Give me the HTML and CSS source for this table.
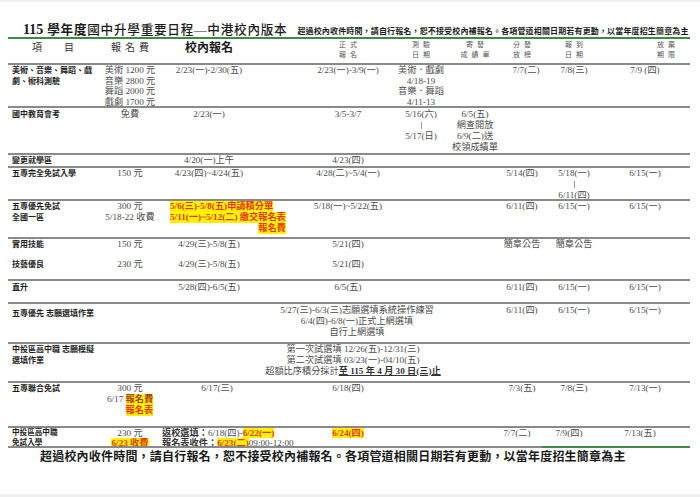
FILE: index.html
```html
<!DOCTYPE html>
<html lang="zh-Hant">
<head>
<meta charset="utf-8">
<title>115 學年度國中升學重要日程</title>
<link rel="stylesheet" href="styles.css">
</head>
<body>
<div class="page">
  <div class="sheet">
    <div class="title">
      <span class="t-num">115</span>
      <span class="t-main"><b>學年度</b>國中升學重要日程—中港校內版本</span>
      <span class="t-note">超過校內收件時間，請自行報名，恕不接受校內補報名。各項管道相關日期若有更動，以當年度招生簡章為主</span>
    </div>

    <div class="grid head">
      <div class="k1 h-item"><span>項</span><span>目</span></div>
      <div class="k2 h-fee">報名費</div>
      <div class="k3 h-in">校內報名</div>
      <div class="k5 h-sm">正式<br>報名</div>
      <div class="k6 h-sm">測驗<br>日期</div>
      <div class="k7 h-sm">寄發<br>成績單</div>
      <div class="k8 h-sm">分發<br>放榜</div>
      <div class="k9 h-sm">報到<br>日期</div>
      <div class="k10 h-sm h-quit">放棄<br>期限</div>
    </div>

    <div class="grid row r1">
      <div class="k1 item">美術、音樂、舞蹈、戲<br>劇、術科測驗</div>
      <div class="k2 c">美術 1200 元<br>音樂 2800 元<br>舞蹈 2000 元<br>戲劇 1700 元</div>
      <div class="k3 c">2/23(一)-2/30(五)</div>
      <div class="k5 c">2/23(一)-3/9(一)</div>
      <div class="k6 c">美術．戲劇<br>4/18-19<br>音樂．舞蹈<br>4/11-13</div>
      <div class="k8 c nudge-r">7/7(二)</div>
      <div class="k9 c">7/8(三)</div>
      <div class="k10 c">7/9 (四)</div>
    </div>

    <div class="grid row r2">
      <div class="k1 item">國中教育會考</div>
      <div class="k2 c">免費</div>
      <div class="k3 c">2/23(一)</div>
      <div class="k5 c">3/5-3/7</div>
      <div class="k6 c"><div>5/16(六)</div><div class="vbar"></div><div>5/17(日)</div></div>
      <div class="k7 c">6/5(五)<br>網查開放<br>6/9(二)送<br>校領成績單</div>
    </div>

    <div class="grid row r3">
      <div class="k1 item">變更就學區</div>
      <div class="k3 c">4/20(一)上午</div>
      <div class="k5 c">4/23(四)</div>
    </div>

    <div class="grid row r4">
      <div class="k1 item">五專完全免試入學</div>
      <div class="k2 c">150 元</div>
      <div class="k3 c">4/23(四)~4/24(五)</div>
      <div class="k5 c">4/28(二)~5/4(一)</div>
      <div class="k8 c">5/14(四)</div>
      <div class="k9 c"><div>5/18(一)</div><div class="vbar"></div><div>6/11(四)</div></div>
      <div class="k10 c">6/15(一)</div>
    </div>

    <div class="grid row r5">
      <div class="k1 item">五專優先免試<br>全國一區</div>
      <div class="k2 c">300 元<br>5/18-22 收費</div>
      <div class="k3 hl-cell">
        <div class="hl-wrap">
          <div class="hl-line">5/6(三)-5/8(五)申請積分單</div>
          <div class="hl-line">5/11(一)~5/12(二) 繳交報名表</div>
          <div class="hl-line end">報名費</div>
        </div>
      </div>
      <div class="k5 c">5/18(一)~5/22(五)</div>
      <div class="k8 c">6/11(四)</div>
      <div class="k9 c">6/15(一)</div>
      <div class="k10 c">6/15(一)</div>
    </div>

    <div class="grid row r6a">
      <div class="k1 item">實用技能</div>
      <div class="k2 c">150 元</div>
      <div class="k3 c">4/29(三)-5/8(五)</div>
      <div class="k5 c">5/21(四)</div>
      <div class="k8 c">簡章公告</div>
      <div class="k9 c">簡章公告</div>
    </div>
    <div class="grid sub r6b">
      <div class="k1 item">技藝優良</div>
      <div class="k2 c">230 元</div>
      <div class="k3 c">4/29(三)-5/8(五)</div>
      <div class="k5 c">5/21(四)</div>
    </div>

    <div class="grid row r7">
      <div class="k1 item">直升</div>
      <div class="k3 c">5/28(四)-6/5(五)</div>
      <div class="k5 c">6/5(五)</div>
      <div class="k8 c">6/11(四)</div>
      <div class="k9 c">6/15(一)</div>
      <div class="k10 c">6/15(一)</div>
    </div>

    <div class="grid row r8">
      <div class="k1 item low">五專優先 志願選填作業</div>
      <div class="span37 c merged">5/27(三)-6/3(三)志願選填系統操作練習<br>6/4(四)-6/8(一)正式上網選填<br>自行上網選填</div>
      <div class="k8 c">6/11(四)</div>
      <div class="k9 c">6/15(一)</div>
      <div class="k10 c">6/15(一)</div>
    </div>

    <div class="grid row r9">
      <div class="k1 item">中投區高中職 志願模擬<br>選填作業</div>
      <div class="span37 c merged">第一次試選填 12/26(五)-12/31(三)<br>第二次試選填 03/23(一)-04/10(五)<br><span>超額比序積分採計<b class="ul">至 115 年 4 月 30 日(三)止</b></span></div>
    </div>

    <div class="grid row r10">
      <div class="k1 item">五專聯合免試</div>
      <div class="k2 c">
        <div>300 元</div>
        <div class="stack">
          <div>6/17 <span class="hl dark">報名費</span></div>
          <div><span class="hl">報名表</span></div>
        </div>
      </div>
      <div class="k3 c shift">6/17(三)</div>
      <div class="k5 c">6/18(四)</div>
      <div class="k8 c">7/3(五)</div>
      <div class="k9 c">7/8(三)</div>
      <div class="k10 c">7/13(一)</div>
    </div>

    <div class="grid row r11">
      <div class="k1 item">中投區高中職<br>免試入學</div>
      <div class="k2 c"><div>230 元</div><div><span class="hl">6/23 收費</span></div></div>
      <div class="k3 l">
        <div><b class="lbl">返校選填：</b>6/18(四)-<span class="hl">6/22(一)</span></div>
        <div><b class="lbl">報名表收件：</b><span class="hl">6/23(二)</span>09:00-12:00</div>
      </div>
      <div class="k5 c"><span class="hl">6/24(四)</span></div>
      <div class="k8 c nudge-l">7/7(二)</div>
      <div class="k9 c nudge-l">7/9(四)</div>
      <div class="k10 c nudge-l">7/13(五)</div>
    </div>

    <div class="endrule"><div class="gray"></div><div class="green"></div></div>
    <div class="footer">超過校內收件時間，請自行報名，恕不接受校內補報名。各項管道相關日期若有更動，以當年度招生簡章為主</div>
  </div>
</div>
</body>
</html>
```

FILE: styles.css
```css
* {
  box-sizing: border-box;
  margin: 0;
  padding: 0;
}

html, body {
  width: 700px;
  height: 497px;
  overflow: hidden;
  background: #ffffff;
}

body {
  font-family: "Liberation Serif", "Noto Sans CJK TC", serif;
  color: #4c4c4c;
}

.page {
  height: 497px;
  border-top: 2px solid #efefef;
  border-bottom: 3px solid #efefef;
}

.sheet {
  width: 682px;
  margin-left: 8px;
}

/* ---------- title ---------- */
.title {
  height: 37px;
  padding: 20px 0 0 15px;
  border-bottom: 2px solid #3e8a42;
  display: flex;
  align-items: baseline;
  white-space: nowrap;
  color: #1c1c1c;
}

.t-num {
  font-family: "Liberation Serif", serif;
  font-weight: bold;
  font-size: 14px;
  line-height: 15px;
  margin-right: 4px;
}

.t-main {
  font-size: 12.6px;
  line-height: 15px;
  font-weight: 500;
  letter-spacing: 0.75px;
}

.t-main b {
  font-weight: bold;
}

.t-note {
  font-size: 8px;
  line-height: 15px;
  font-weight: bold;
  letter-spacing: 0.15px;
  margin-left: 10px;
}

/* ---------- grid ---------- */
.grid {
  display: grid;
  grid-template-columns: 94px 56px 102px 40px 96px 50px 58px 36px 68px 74px 8px;
}

.grid > * {
  grid-row: 1;
}

.k1 { grid-column: 1; }
.k2 { grid-column: 2; }
.k3 { grid-column: 3; }
.k5 { grid-column: 5; }
.k6 { grid-column: 6; }
.k7 { grid-column: 7; }
.k8 { grid-column: 8; }
.k9 { grid-column: 9; }
.k10 { grid-column: 10; }
.span37 { grid-column: 3 / 8; }

/* ---------- header ---------- */
.head {
  height: 24px;
  color: #333333;
}

.h-item {
  display: flex;
  justify-content: center;
  gap: 22px;
  font-size: 10px;
  line-height: 18px;
  padding-right: 4px;
}

.h-fee {
  text-align: center;
  font-size: 10px;
  line-height: 18px;
  letter-spacing: 4px;
  padding-left: 4px;
}

.h-in {
  text-align: center;
  font-size: 12px;
  line-height: 18px;
  font-weight: bold;
  color: #1a1a1a;
}

.h-sm {
  display: flex;
  flex-direction: column;
  align-items: center;
  text-align: center;
  white-space: nowrap;
  font-size: 7px;
  line-height: 10px;
  letter-spacing: 4px;
  padding-top: 1px;
  padding-left: 4px;
  color: #555555;
}

.h-quit {
  padding-left: 46px;
}

/* ---------- rows ---------- */
.row {
  border-top: 2px solid #8a8a8a;
}

.row, .sub {
  font-size: 9.2px;
  line-height: 11px;
}

.r1 { height: 43px; line-height: 10.5px; }
.r2 { height: 47px; padding-top: 1px; }
.r3 { height: 13px; }
.r4 { height: 33px; }
.r5 { height: 38px; }
.r6a { height: 20px; }
.r6b { height: 22px; padding-top: 2px; }
.r7 { height: 23px; padding-top: 1px; }
.r8 { height: 40px; padding-top: 1px; }
.r9 { height: 39px; }
.r10 { height: 45px; }
.r11 { height: 20px; line-height: 10px; }

.item {
  font-size: 8px;
  font-weight: bold;
  color: #1e1e1e;
  padding-left: 4px;
  white-space: nowrap;
}

.r1 .item {
  line-height: 11px;
}

.r11 .item {
  font-size: 7.6px;
}

.item.low {
  padding-top: 3px;
}

.c {
  display: flex;
  flex-direction: column;
  align-items: center;
  text-align: center;
  white-space: nowrap;
}

.l {
  padding-left: 4px;
  white-space: nowrap;
}

.lbl {
  color: #333333;
}

.vbar {
  width: 1px;
  height: 11px;
  border-top: 2px solid transparent;
  border-bottom: 2px solid transparent;
  background: #9a9a9a;
  background-clip: content-box;
}

.merged {
  padding-left: 52px;
}

.r9 .merged {
  padding-left: 44px;
}

.ul {
  text-decoration: underline;
  color: #333333;
}

.shift {
  padding-left: 16px;
}

.nudge-l {
  padding-right: 10px;
}

.nudge-r {
  padding-left: 8px;
}

/* ---------- highlights ---------- */
.hl {
  display: inline-block;
  background: #fff200;
  color: #e3381c;
  font-weight: bold;
}

.hl.dark {
  color: #a6401e;
}

.hl-cell {
  padding-left: 12px;
  white-space: nowrap;
}

.hl-wrap {
  display: inline-flex;
  flex-direction: column;
  align-items: flex-start;
}

.hl-line {
  background: #fff200;
  color: #e3381c;
  font-weight: bold;
}

.hl-line.end {
  align-self: flex-end;
}

.stack {
  display: flex;
  flex-direction: column;
  align-items: flex-end;
}

/* ---------- end ---------- */
.endrule {
  display: flex;
  height: 2px;
}

.endrule .gray {
  flex: 1;
  background: #8a8a8a;
}

.endrule .green {
  width: 148px;
  background: #3e8a42;
}

.footer {
  margin-top: 2px;
  padding-left: 32px;
  font-size: 12px;
  line-height: 14px;
  font-weight: bold;
  letter-spacing: 0.2px;
  color: #1a1a1a;
  white-space: nowrap;
}
```
